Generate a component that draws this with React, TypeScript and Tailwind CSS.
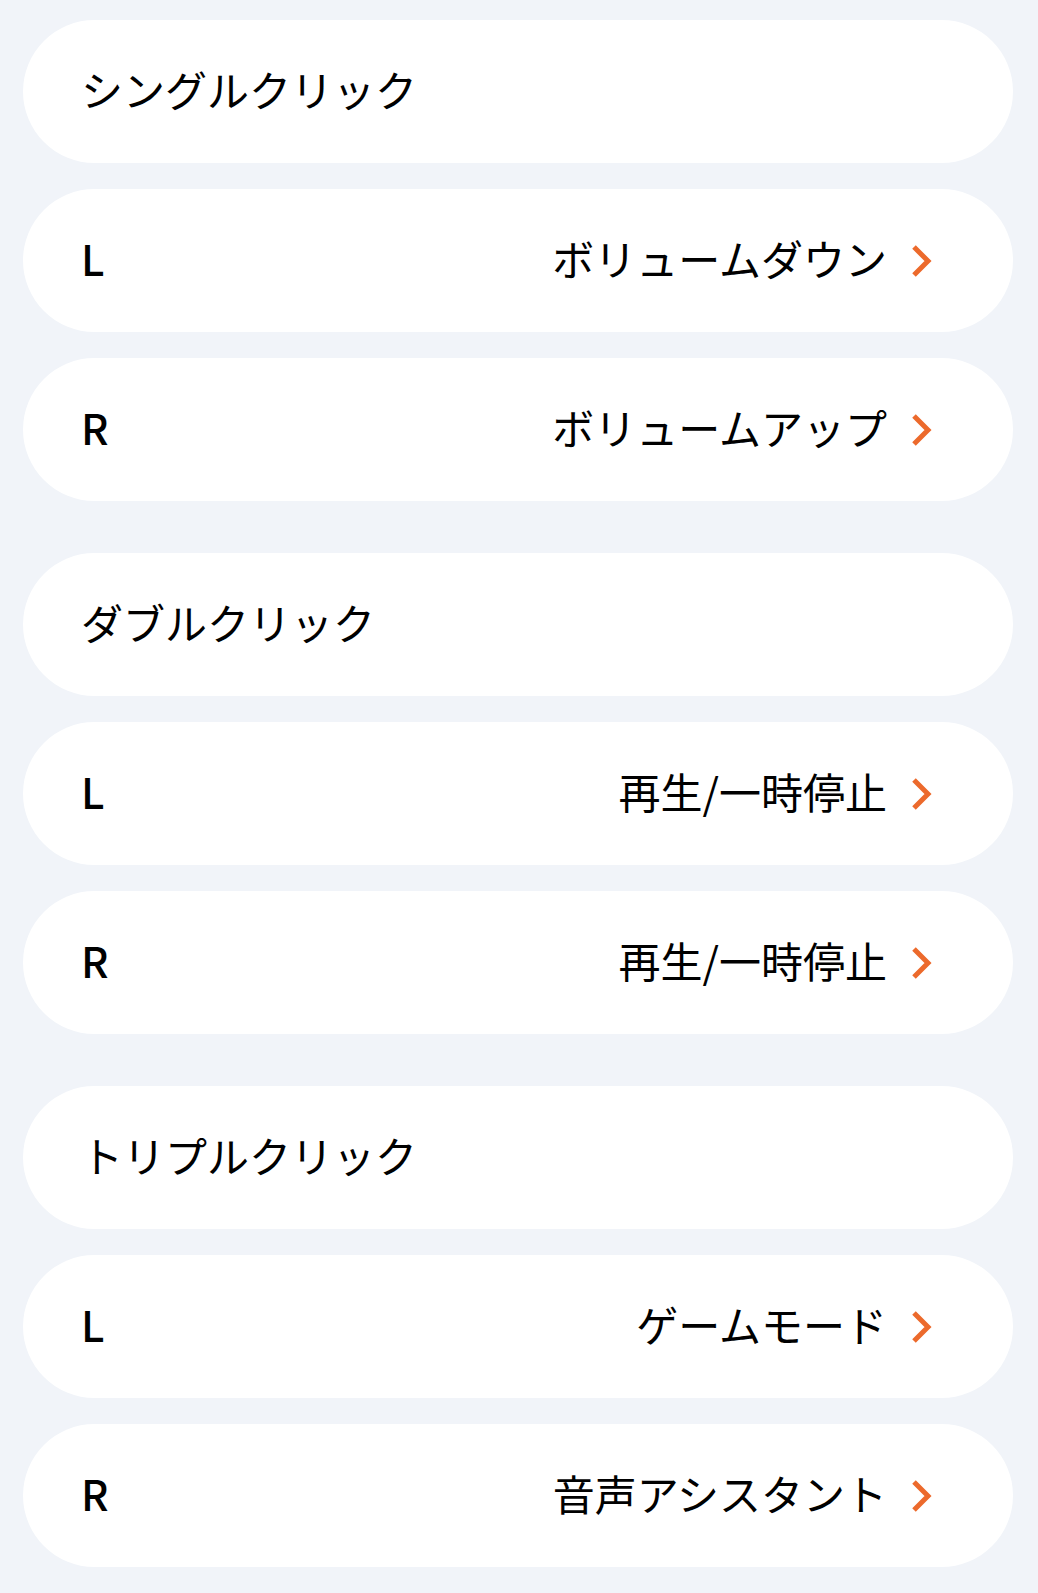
const groups = [
	{
		title: 'シングルクリック',
		rows: [
			{ side: 'L', action: 'ボリュームダウン' },
			{ side: 'R', action: 'ボリュームアップ' },
		],
	},
	{
		title: 'ダブルクリック',
		rows: [
			{ side: 'L', action: '再生/一時停止' },
			{ side: 'R', action: '再生/一時停止' },
		],
	},
	{
		title: 'トリプルクリック',
		rows: [
			{ side: 'L', action: 'ゲームモード' },
			{ side: 'R', action: '音声アシスタント' },
		],
	},
];

const Chevron = () => (
	<svg width="22" height="34" viewBox="0 0 22 34" fill="none" className="mt-[6px] shrink-0">
		<path d="M3 3 L17 17 L3 31" stroke="#EC6A2C" strokeWidth="5" strokeLinecap="butt" strokeLinejoin="miter" />
	</svg>
);

const App = () => {
	return (
		<div
			className="min-h-[1593px] w-full bg-[#F1F4F9] pb-6 pl-[23px] pr-[25px] pt-5 text-black"
			style={{ fontFamily: '"Noto Sans CJK JP", "Noto Sans", sans-serif' }}
		>
			<div className="flex flex-col gap-[52px]">
				{groups.map((group) => (
					<section key={group.title} className="flex flex-col gap-[26px]">
						<div className="flex h-[143px] items-center rounded-full bg-white pb-[6px] pl-[58px] pr-[80px]">
							<span className="text-[42px] leading-none">{group.title}</span>
						</div>
						{group.rows.map((row) => (
							<div key={row.side} className="flex h-[143px] items-center justify-between rounded-full bg-white pb-[6px] pl-[58px] pr-[80px]">
								<span className="text-[42px] font-medium leading-none">{row.side}</span>
								<div className="flex items-center gap-[24px]">
									<span className="text-[42px] leading-none">{row.action}</span>
									<Chevron />
								</div>
							</div>
						))}
					</section>
				))}
			</div>
		</div>
	);
};

export default App;
